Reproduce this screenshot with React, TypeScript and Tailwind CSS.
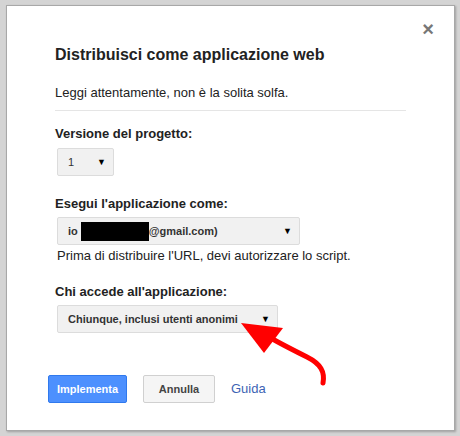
import React from 'react';

const font = { fontFamily: '"Liberation Sans", Arial, sans-serif' };

const Caret = () => <span className="text-[9px] leading-none text-black">▼</span>;

const Select: React.FC<{ width: string; children: React.ReactNode }> = ({ width, children }) => (
  <div
    className={`${width} h-[28px] flex items-center justify-between pl-[10px] pr-[7px] bg-[#f1f1f1] border border-[#dcdcdc] rounded-[2px] text-[11px] text-[#444]`}
  >
    {children}
  </div>
);

const App: React.FC = () => {
  return (
    <div className="w-[460px] h-[436px] bg-[#d4d4d4] pl-[6px] pt-[5px]" style={font}>
      <div className="relative w-[449px] h-[426px] bg-white border border-[#a8a8a8] shadow-[1px_1px_2px_rgba(0,0,0,0.25)] pl-[48px] pr-[48px] pt-[39px]">
        <span className="absolute right-[20px] top-[13px] text-[#777] text-[20px] leading-none font-bold">×</span>

        <h1 className="text-[16px] font-bold text-[#222] leading-[20px]">Distribuisci come applicazione web</h1>
        <p className="mt-[20px] text-[13px] text-[#222] leading-[16px]">Leggi attentamente, non è la solita solfa.</p>
        <div className="mt-[9px] h-px bg-[#e5e5e5]" />

        <div className="mt-[15px] text-[13px] font-bold text-[#222] leading-[16px]">Versione del progetto:</div>
        <div className="mt-[6px] ml-[2px]">
          <Select width="w-[57px]">
            <span className="text-[#333]">1</span>
            <Caret />
          </Select>
        </div>

        <div className="mt-[20px] text-[13px] font-bold text-[#222] leading-[16px]">Esegui l'applicazione come:</div>
        <div className="mt-[5px] ml-[2px]">
          <Select width="w-[243px]">
            <span className="flex items-center text-[#333] font-bold">
              io
              <span className="inline-block w-[68px] h-[19px] bg-black ml-[3px]" />
              <span>@gmail.com)</span>
            </span>
            <Caret />
          </Select>
        </div>
        <p className="mt-[3px] ml-[2px] text-[13px] text-[#222] leading-[16px]">
          Prima di distribuire l'URL, devi autorizzare lo script.
        </p>

        <div className="mt-[20px] text-[13px] font-bold text-[#222] leading-[16px]">Chi accede all'applicazione:</div>
        <div className="mt-[5px] ml-[2px]">
          <Select width="w-[221px]">
            <span className="text-[#333] font-bold">Chiunque, inclusi utenti anonimi</span>
            <Caret />
          </Select>
        </div>

        <div className="mt-[42px] -ml-[7px] flex items-center">
          <button className="w-[79px] h-[28px] bg-[#4d90fe] border border-[#3079ed] rounded-[2px] text-white text-[11px] font-bold">
            Implementa
          </button>
          <button className="ml-[16px] w-[72px] h-[28px] bg-[#f5f5f5] border border-[#d0d0d0] rounded-[2px] text-[#444] text-[11px] font-bold">
            Annulla
          </button>
          <span className="ml-[16px] text-[13px] text-[#3d64b4]">Guida</span>
        </div>

        <svg className="absolute left-[0px] top-[0px] pointer-events-none" width="449" height="426">
          <path d="M316 377 C318 366 314 358 300 351 C288 345 274 338 262 331" stroke="#f00" strokeWidth="5" fill="none" strokeLinecap="round" />
          <polygon points="234,317 276,322 257,347" fill="#f00" />
        </svg>
      </div>
    </div>
  );
};

export default App;
